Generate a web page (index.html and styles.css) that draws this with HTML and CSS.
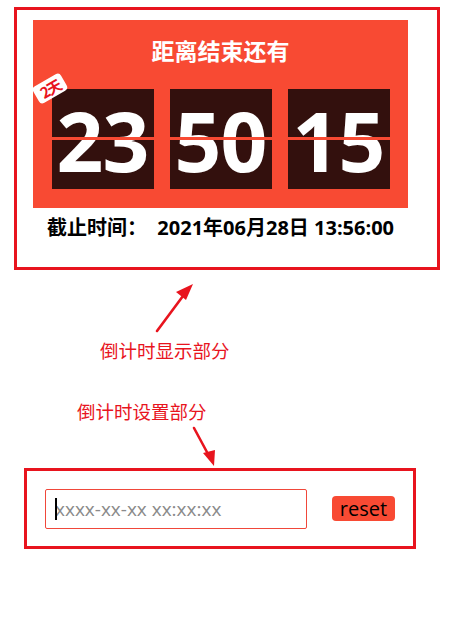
FILE: index.html
```html
<!DOCTYPE html>
<html lang="zh">
<head>
<meta charset="utf-8">
<title>倒计时</title>
<link rel="stylesheet" href="styles.css">
</head>
<body>
<section class="display-box">
  <div class="panel">
    <h1 class="title">距离结束还有</h1>
    <div class="digits">
      <div class="cell"><span class="num">23</span><span class="days">2天</span></div>
      <div class="cell"><span class="num">50</span></div>
      <div class="cell"><span class="num">15</span></div>
    </div>
  </div>
  <p class="deadline">截止时间：&nbsp;&nbsp;2021年06月28日 13:56:00</p>
</section>

<section class="notes">
  <svg class="arrow arrow-up" width="60" height="52" viewBox="0 0 60 52">
    <line x1="2" y1="48" x2="28" y2="13" stroke="#e8141e" stroke-width="2.6" stroke-linecap="round"/>
    <polygon points="38,1 21,9 31,17" fill="#e8141e"/>
  </svg>
  <p class="note note-display">倒计时显示部分</p>
  <p class="note note-set">倒计时设置部分</p>
  <svg class="arrow arrow-down" width="40" height="42" viewBox="0 0 40 42">
    <line x1="2" y1="2" x2="16" y2="28" stroke="#e8141e" stroke-width="2.6" stroke-linecap="round"/>
    <polygon points="22,40 11,27 23,24" fill="#e8141e"/>
  </svg>
</section>

<section class="set-box">
  <span class="field">
    <input class="time-input" type="text" placeholder="xxxx-xx-xx xx:xx:xx" autofocus>
    <span class="caret"></span>
  </span>
  <button class="reset-btn" type="button">reset</button>
</section>
</body>
</html>
```

FILE: styles.css
```css
* { box-sizing: border-box; }

body {
  margin: 0;
  font-family: "Open Sans", "Noto Sans CJK SC", sans-serif;
  background: #fff;
}

.display-box {
  margin: 7px 0 0 14px;
  width: 426px;
  height: 263px;
  border: 3px solid #e8141e;
  padding: 10px 0 0 16px;
}

.panel {
  width: 375px;
  height: 188px;
  background: #f84a33;
  padding-top: 13px;
}

.title {
  margin: 0;
  height: 37px;
  text-align: center;
  color: #fff;
  font-family: "Noto Sans CJK SC", sans-serif;
  font-weight: 700;
  font-size: 23px;
  line-height: 34px;
}

.digits {
  margin-top: 19px;
  display: flex;
  justify-content: center;
  gap: 16px;
}

.cell {
  position: relative;
  width: 102px;
  height: 100px;
  background: #33100d;
  display: flex;
  align-items: center;
  justify-content: center;
}

.cell::after {
  content: "";
  position: absolute;
  left: 0;
  right: 0;
  top: 48px;
  height: 3px;
  background: #f84a33;
}

.num {
  color: #fff;
  font-family: "Open Sans", sans-serif;
  font-weight: 700;
  font-size: 82px;
  line-height: 1;
  letter-spacing: -1px;
  position: relative;
  top: 1px;
}

.days {
  position: absolute;
  left: -18px;
  top: -10px;
  width: 32px;
  height: 19px;
  background: #fff;
  border-radius: 4px;
  transform: rotate(-30deg);
  color: #e8141e;
  font-family: "Noto Sans CJK SC", sans-serif;
  font-weight: 700;
  font-size: 15px;
  line-height: 19px;
  text-align: center;
  letter-spacing: -1.5px;
}

.deadline {
  margin: 0;
  width: 375px;
  height: 40px;
  text-align: center;
  font-weight: 700;
  font-size: 20px;
  line-height: 40px;
  color: #000;
}

.notes {
  height: 198px;
  padding-top: 13px;
}

.note {
  margin: 0;
  color: #e8141e;
  font-family: "Noto Sans CJK SC", sans-serif;
  font-size: 18.5px;
  line-height: 26px;
}

.arrow { display: block; }

.arrow-up { margin-left: 155px; }

.note-display { margin-left: 100px; margin-top: 2px; }

.note-set { margin-left: 77px; margin-top: 35px; }

.arrow-down { margin-left: 192px; margin-top: 2px; }

.set-box {
  margin-left: 24px;
  width: 392px;
  height: 81px;
  border: 3px solid #e8141e;
  display: flex;
  align-items: center;
  padding-left: 18px;
}

.field {
  position: relative;
  display: block;
}

.time-input {
  display: block;
  width: 262px;
  height: 40px;
  border: 1px solid #f0473a;
  border-radius: 2px;
  padding: 0 9px;
  font-family: "Open Sans", sans-serif;
  font-size: 19px;
  color: #333;
  outline: none;
  caret-color: transparent;
}

.time-input::placeholder { color: #8a8a8a; }

.caret {
  position: absolute;
  left: 10px;
  top: 9px;
  width: 2px;
  height: 22px;
  background: #000;
}

.reset-btn {
  margin-left: 25px;
  width: 63px;
  height: 25px;
  border: none;
  border-radius: 4px;
  background: #f84a33;
  color: #000;
  font-family: "Open Sans", sans-serif;
  font-size: 20px;
  line-height: 25px;
  padding: 0;
}
```
